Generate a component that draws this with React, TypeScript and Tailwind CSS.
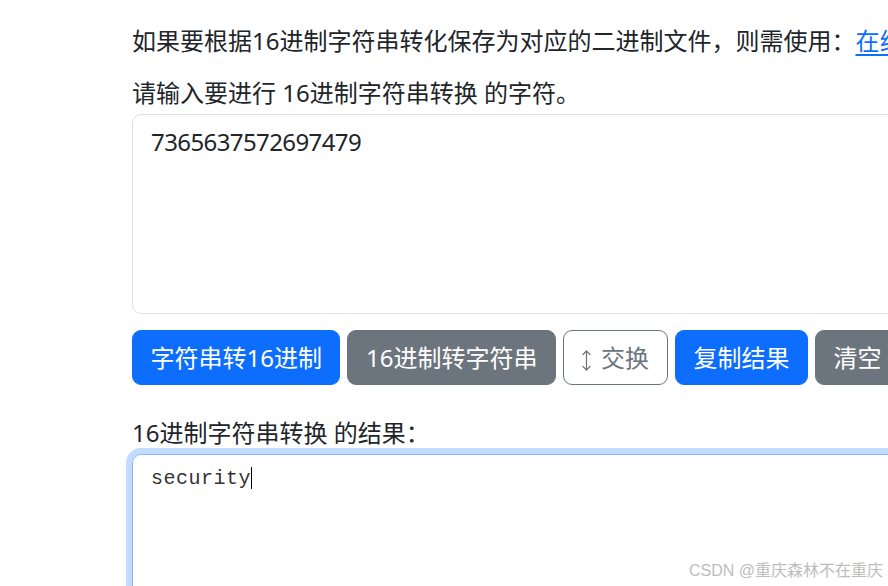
import React from "react";

function UpDownArrow() {
  return (
    <svg width="9" height="21" viewBox="0 0 9 21" fill="none" stroke="#6c757d" strokeWidth="1.2" strokeLinecap="round" strokeLinejoin="round" className="mt-[6px]">
      <path d="M4.5 1 V20" />
      <path d="M1 4.5 L4.5 1 L8 4.5" />
      <path d="M1 16.5 L4.5 20 L8 16.5" />
    </svg>
  );
}

export default function App() {
  const font = "font-['Noto_Sans','Noto_Sans_CJK_SC',sans-serif]";
  return (
    <div className={`relative w-[888px] h-[586px] overflow-hidden bg-white text-[#212529] ${font}`}>
      <div className="w-[1400px] pl-[132px] pt-[23px] flex flex-col items-start">
        <div className="h-[36px] leading-[36px] text-[24px] whitespace-nowrap mb-[16px]">
          如果要根据16进制字符串转化保存为对应的二进制文件，则需使用：
          <span className="text-[#0d6efd] underline underline-offset-[4px]">在线十六进制转换工具</span>
        </div>
        <div className="h-[36px] leading-[36px] text-[24px] whitespace-nowrap mb-[3px]">
          请输入要进行 16进制字符串转换 的字符。
        </div>
        <div className="w-[1000px] h-[200px] border border-[#dee2e6] rounded-[9px] px-[18px] py-[9px] text-[24px] leading-[36px] tracking-[-0.6px]">
          7365637572697479
        </div>
        <div className="flex gap-[7px] mt-[16px] text-[24px] whitespace-nowrap">
          <div className="h-[55px] px-[17.5px] flex items-center rounded-[9px] border border-[#0d6efd] bg-[#0d6efd] text-white">字符串转16进制</div>
          <div className="h-[55px] px-[17.5px] flex items-center rounded-[9px] border border-[#6c757d] bg-[#6c757d] text-white">16进制转字符串</div>
          <div className="h-[55px] px-[18px] flex items-center gap-[10px] rounded-[9px] border border-[#6c757d] bg-white text-[#6c757d]">
            <UpDownArrow />
            <span>交换</span>
          </div>
          <div className="h-[55px] px-[17.5px] flex items-center rounded-[9px] border border-[#0d6efd] bg-[#0d6efd] text-white">复制结果</div>
          <div className="h-[55px] px-[17.5px] flex items-center rounded-[9px] border border-[#6c757d] bg-[#6c757d] text-white">清空</div>
        </div>
        <div className="h-[36px] leading-[36px] text-[24px] whitespace-nowrap mt-[30px] mb-[3px]">
          16进制字符串转换 的结果：
        </div>
        <div className="w-[1000px] h-[220px] border border-[#86b7fe] rounded-[9px] px-[18px] py-[9px] shadow-[0_0_0_6px_rgba(13,110,253,0.25)] font-['Liberation_Mono',monospace] text-[20px] leading-[30px] tracking-[0.5px] text-[#333]">
          security<span className="inline-block w-[1px] h-[22px] bg-black align-[-5px]"></span>
        </div>
      </div>
      <div className="absolute right-[5px] bottom-[7px] text-[16px] leading-[16px] text-[#bdbdbd] font-['Liberation_Sans','Noto_Sans_CJK_SC',sans-serif] whitespace-nowrap">
        CSDN @重庆森林不在重庆
      </div>
    </div>
  );
}
